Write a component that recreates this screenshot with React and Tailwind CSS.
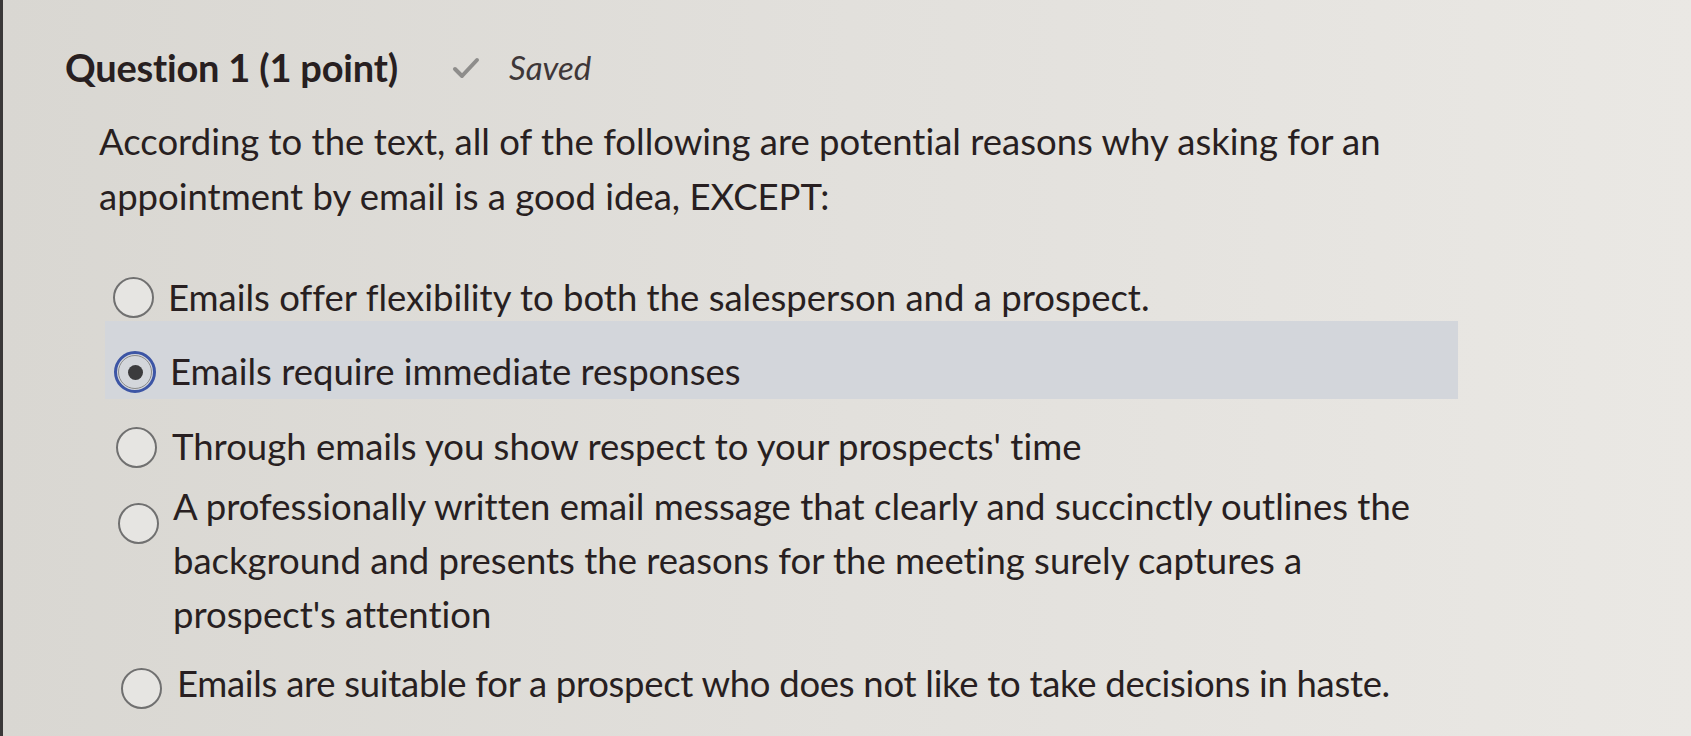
import React from "react";

function Radio({ selected }) {
  if (selected) {
    return (
      <div className="w-[42px] h-[42px] shrink-0 rounded-full border-[3px] border-[#3c55a5] flex items-center justify-center">
        <div className="w-[34px] h-[34px] rounded-full border border-[#8a8a8a] flex items-center justify-center">
          <div className="w-[15px] h-[15px] rounded-full bg-[#3b3b3d]" />
        </div>
      </div>
    );
  }
  return <div className="w-[41px] h-[41px] shrink-0 rounded-full border-2 border-[#707070] bg-[#e6e5e2]" />;
}

export default function App() {
  return (
    <div
      className="w-[1691px] h-[736px] overflow-hidden border-l-[3px] border-[#3a3838] bg-linear-to-r from-[#d9d7d2] via-[#e2e0dc] to-[#eae8e4] text-[#281f21] [font-variant-ligatures:none]"
      style={{ fontFamily: "Lato, 'Open Sans', sans-serif" }}
    >
      <div className="pt-[45px] pl-[62px] flex items-center h-[89px]">
        <span className="text-[38px] leading-[44px] font-bold tracking-[-0.2px]">Question 1 (1 point)</span>
        <svg className="ml-[54px] mt-[2px]" width="28" height="22" viewBox="0 0 28 22">
          <path d="M3 12 L10 19 L25 3" fill="none" stroke="#8e8d8b" strokeWidth="4" strokeLinecap="round" strokeLinejoin="round" />
        </svg>
        <span className="ml-[29px] text-[33px] leading-[44px] italic text-[#3e3738]">Saved</span>
      </div>

      <div className="mt-[25px] pl-[96px] text-[36.5px] leading-[55px]">
        According to the text, all of the following are potential reasons why asking for an
        <br />
        appointment by email is a good idea, EXCEPT:
      </div>

      <div className="mt-[49px] ml-[102px] flex flex-col text-[36.5px]">
        <div className="h-[48px] flex items-center pl-[8px]">
          <Radio />
          <span className="ml-[14px] leading-[48px]">Emails offer flexibility to both the salesperson and a prospect.</span>
        </div>
        <div className="h-[78px] w-[1353px] bg-[#d3d6db] flex items-center pt-[22px] pl-[9px]">
          <div className="mt-[2px]">
            <Radio selected />
          </div>
          <span className="ml-[14px] leading-[48px]">Emails require immediate responses</span>
        </div>
        <div className="mt-[23px] h-[48px] flex items-center pl-[11px]">
          <div className="mt-[3px]">
            <Radio />
          </div>
          <span className="ml-[15px] leading-[48px]">Through emails you show respect to your prospects' time</span>
        </div>
        <div className="mt-[9px] flex items-start pl-[13px]">
          <div className="mt-[24px]">
            <Radio />
          </div>
          <span className="ml-[14px] leading-[54px]">
            A professionally written email message that clearly and succinctly outlines the
            <br />
            background and presents the reasons for the meeting surely captures a
            <br />
            prospect's attention
          </span>
        </div>
        <div className="mt-[18px] h-[48px] flex items-center pl-[16px]">
          <div className="mt-[10px]">
            <Radio />
          </div>
          <span className="ml-[15px] leading-[48px] tracking-[-0.3px]">Emails are suitable for a prospect who does not like to take decisions in haste.</span>
        </div>
      </div>
    </div>
  );
}
